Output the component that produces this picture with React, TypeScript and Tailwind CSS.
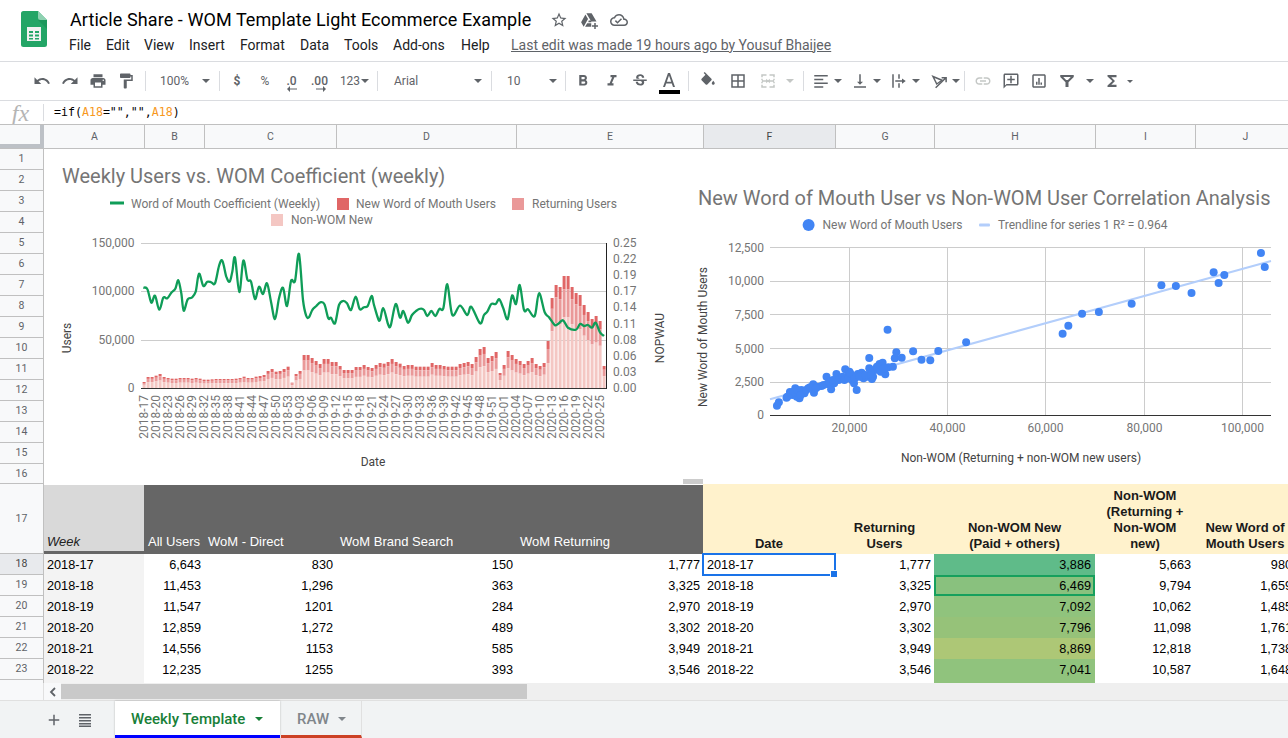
import React from "react";

const ICON = "#5f6368";
type P = [number, number];

function Ic({ d, size = 18, color = ICON }: { d: string; size?: number; color?: string }) {
  return (
    <svg width={size} height={size} viewBox="0 0 24 24" fill={color}>
      <path d={d} />
    </svg>
  );
}

function Caret({ color = ICON, small }: { color?: string; small?: boolean }) {
  return (
    <svg width={small ? 6 : 8} height={small ? 3 : 4} viewBox="0 0 8 4" fill={color} className="shrink-0">
      <path d="M0 0h8L4 4z" />
    </svg>
  );
}

function Sep() {
  return <div className="w-px h-[20px] bg-[#dadce0] shrink-0" />;
}

function smooth(pts: P[]) {
  let d = `M${pts[0][0].toFixed(1)} ${pts[0][1].toFixed(1)}`;
  for (let i = 0; i < pts.length - 1; i++) {
    const p0 = pts[Math.max(0, i - 1)];
    const p1 = pts[i];
    const p2 = pts[i + 1];
    const p3 = pts[Math.min(pts.length - 1, i + 2)];
    const c1x = p1[0] + (p2[0] - p0[0]) / 6;
    const c1y = p1[1] + (p2[1] - p0[1]) / 6;
    const c2x = p2[0] - (p3[0] - p1[0]) / 6;
    const c2y = p2[1] - (p3[1] - p1[1]) / 6;
    d += `C${c1x.toFixed(1)} ${c1y.toFixed(1)} ${c2x.toFixed(1)} ${c2y.toFixed(1)} ${p2[0].toFixed(1)} ${p2[1].toFixed(1)}`;
  }
  return d;
}

const tops = [
  457, 442, 442, 438, 433, 442, 445, 447, 447, 445, 445, 445, 447, 445, 447, 450, 450, 449, 448, 448, 448, 448, 448, 447, 445, 441,
  445, 445, 441, 439, 436, 424, 418, 426, 424, 418, 411, 459, 433, 424, 376, 376, 385, 394, 403, 388, 388, 397, 397, 409, 421, 421,
  421, 412, 412, 406, 412, 415, 406, 400, 402, 397, 388, 397, 402, 409, 406, 406, 411, 411, 411, 411, 400, 406, 406, 409, 411, 411,
  411, 403, 400, 397, 403, 382, 358, 352, 385, 379, 367, 430, 406, 364, 376, 388, 394, 403, 394, 385, 403, 409, 400, 334, 205, 166,
  172, 139, 139, 172, 190, 196, 226, 247, 268, 259, 274, 409,
];

const lineA: P[] = [
  [298, 173], [310, 177], [322, 218], [333, 197], [346, 239], [358, 203], [370, 205], [382, 188], [394, 176], [403, 151], [412, 190],
  [419, 242], [431, 208], [443, 203], [455, 185], [465, 131], [478, 168], [490, 155], [502, 157], [513, 160], [525, 108], [535, 92],
  [547, 140], [557, 155], [565, 125], [573, 83], [586, 186], [598, 92], [610, 148], [621, 155], [633, 207], [645, 170], [657, 192],
  [669, 160], [681, 215], [693, 267], [705, 205], [717, 173], [729, 228], [741, 153], [753, 153], [765, 72], [777, 210], [787, 258],
  [795, 262], [805, 240], [817, 228], [829, 217], [841, 222], [853, 265], [861, 263], [873, 280], [885, 225], [897, 213], [909, 220],
  [921, 240], [935, 200], [947, 237], [959, 232], [971, 228], [983, 198],
];
const lineB: P[] = [
  [0, 225], [12, 265], [18, 270], [28, 235], [42, 282], [50, 287], [65, 222], [78, 263], [88, 243], [102, 278], [114, 255], [126, 243],
  [140, 236], [150, 240], [160, 258], [172, 243], [184, 258], [196, 237], [208, 235], [220, 163], [235, 255], [258, 227], [280, 255],
  [292, 230], [318, 280], [330, 255], [340, 245], [352, 222], [365, 222], [376, 208], [388, 235], [401, 267], [414, 197], [426, 222],
  [437, 165], [450, 240], [462, 238], [482, 258], [495, 190], [512, 247], [525, 262], [542, 285], [552, 282], [567, 271], [582, 293],
  [606, 299], [618, 282], [630, 288], [642, 285], [654, 293], [665, 278], [678, 307], [690, 318],
];
const greenLine: P[] = [
  ...lineA.map(([x, y]) => [44 + x / 3, 230 + y / 3] as P),
  ...lineB.map(([x, y]) => [374 + x / 3, 230 + y / 3] as P),
];

const xLabels = [
  "2018-17", "2018-20", "2018-23", "2018-26", "2018-29", "2018-32", "2018-35", "2018-38", "2018-41", "2018-44", "2018-47", "2018-50",
  "2018-53", "2019-03", "2019-06", "2019-09", "2019-12", "2019-15", "2019-18", "2019-21", "2019-24", "2019-27", "2019-30", "2019-33",
  "2019-36", "2019-39", "2019-42", "2019-45", "2019-48", "2019-51", "2020-01", "2020-04", "2020-07", "2020-10", "2020-13", "2020-16",
  "2020-19", "2020-22", "2020-25",
];

function LeftChart() {
  const grey = "#757575";
  return (
    <svg width="636" height="335" viewBox="44 149 636 335" className="shrink-0 font-['Roboto',sans-serif]">
      <text x="62" y="183" fontSize="20" fill={grey}>Weekly Users vs. WOM Coefficient (weekly)</text>
      <rect x="110" y="201.5" width="14" height="3" fill="#0f9d58" />
      <text x="131" y="208" fontSize="12" fill={grey}>Word of Mouth Coefficient (Weekly)</text>
      <rect x="337" y="198" width="12" height="12" fill="#e06666" />
      <text x="356" y="208" fontSize="12" fill={grey}>New Word of Mouth Users</text>
      <rect x="512" y="198" width="12" height="12" fill="#ea9999" />
      <text x="532" y="208" fontSize="12" fill={grey}>Returning Users</text>
      <rect x="271" y="214" width="12" height="12" fill="#f4c7c3" />
      <text x="291" y="224" fontSize="12" fill={grey}>Non-WOM New</text>
      {[243.5, 291.5, 340.5].map((y) => (
        <line key={y} x1="141" x2="606" y1={y} y2={y} stroke="#ccc" />
      ))}
      {[["150,000", 247], ["100,000", 295], ["50,000", 344], ["0", 392]].map(([t, y]) => (
        <text key={t} x="134.5" y={y} fontSize="12" textAnchor="end" fill={grey}>{t}</text>
      ))}
      {tops.map((yz, i) => {
        const total = (475 - yz) / 3;
        const late = i >= 102 && i < 115;
        const t = total * (late ? 0.12 : 0.17);
        const m = total * (late ? 0.25 : 0.3);
        const x = 142.6 + i * 4;
        return (
          <g key={i}>
            <rect x={x} y={388 - total} width="3" height={t} fill="#e06666" />
            <rect x={x} y={388 - total + t} width="3" height={m} fill="#ea9999" />
            <rect x={x} y={388 - total + t + m} width="3" height={total - t - m} fill="#f4c7c3" />
          </g>
        );
      })}
      <line x1="141" x2="606" y1="388.5" y2="388.5" stroke="#333" />
      <line x1="606.5" x2="606.5" y1="243" y2="389" stroke="#222" />
      <path d={smooth(greenLine)} fill="none" stroke="#0f9d58" strokeWidth="2.3" strokeLinejoin="round" />
      {["0.25", "0.22", "0.19", "0.17", "0.14", "0.11", "0.08", "0.06", "0.03", "0.00"].map((t, i) => (
        <text key={t} x="613" y={247 + i * 16.11} fontSize="12" fill={grey}>{t}</text>
      ))}
      {xLabels.map((t, i) => {
        const x = 148.4 + i * 12;
        return (
          <text key={t} x={x} y="395" fontSize="12" textAnchor="end" fill={grey} transform={`rotate(-90 ${x} 395)`}>{t}</text>
        );
      })}
      <text x="71" y="338" fontSize="12" textAnchor="middle" fill="#444" transform="rotate(-90 71 338)">Users</text>
      <text x="664" y="338" fontSize="12" textAnchor="middle" fill="#444" transform="rotate(-90 664 338)">NOPWAU</text>
      <text x="373" y="466" fontSize="12" textAnchor="middle" fill="#444">Date</text>
    </svg>
  );
}

const dots: P[] = [
  [228, 677], [233, 667], [253, 653], [262, 636], [268, 645], [276, 625], [280, 650], [287, 655], [292, 630], [300, 640], [310, 625],
  [323, 613], [325, 638], [335, 620], [345, 618], [358, 590], [360, 612], [370, 628], [378, 610], [384, 582], [395, 595], [407, 568],
  [412, 590], [418, 575], [425, 600], [430, 610], [437, 630], [440, 582], [450, 578], [455, 595], [465, 590], [470, 565], [477, 597],
  [485, 570], [497, 552], [505, 548], [512, 583], [520, 562], [532, 560], [537, 535], [541, 517], [555, 533], [470, 534], [518, 449],
  [585, 514], [607, 539], [630, 541], [651, 513], [724, 487], [977, 461], [992, 437], [1028, 401], [1072, 396], [1158, 371], [1236, 316],
  [1274, 318], [1315, 339], [1373, 277], [1386, 309], [1401, 285], [1497, 219], [1507, 261], [255, 650], [265, 640], [272, 635],
  [282, 630], [290, 645], [305, 630], [315, 622], [330, 625], [350, 615], [365, 605], [375, 600], [390, 600], [400, 590], [405, 600],
  [415, 595], [420, 580], [432, 595], [445, 590], [460, 585], [475, 585], [480, 590], [490, 560], [500, 575], [508, 565],
];

function RightChart() {
  const grey = "#757575";
  const zx = (x: number) => 690 + x / 2.622;
  const zy = (y: number) => 180 + y / 3;
  return (
    <svg width="608" height="335" viewBox="680 149 608 335" className="shrink-0 font-['Roboto',sans-serif]">
      <text x="698" y="205" fontSize="20" fill={grey}>New Word of Mouth User vs Non-WOM User Correlation Analysis</text>
      <circle cx="808.6" cy="225" r="6" fill="#4285f4" />
      <text x="822.5" y="229" fontSize="12" fill={grey}>New Word of Mouth Users</text>
      <rect x="979" y="223.5" width="11" height="3" rx="1" fill="#b3cefb" />
      <text x="998" y="229" fontSize="12" fill={grey}>Trendline for series 1 R² = 0.964</text>
      {[849.5, 947.5, 1045.5, 1144.5, 1242.5].map((x) => (
        <line key={x} x1={x} x2={x} y1="247" y2="415" stroke="#ccc" />
      ))}
      {[247.5, 281.5, 314.5, 348.5, 382.5].map((y) => (
        <line key={y} x1="770" x2="1271" y1={y} y2={y} stroke="#ccc" />
      ))}
      <line x1="770" x2="1271" y1="415.5" y2="415.5" stroke="#333" />
      {[["12,500", 251.5], ["10,000", 285], ["7,500", 318.5], ["5,000", 352.5], ["2,500", 386], ["0", 419]].map(([t, y]) => (
        <text key={t} x="764" y={y} fontSize="12" textAnchor="end" fill={grey}>{t}</text>
      ))}
      {[["20,000", 849.5], ["40,000", 947.5], ["60,000", 1045.5], ["80,000", 1144.5], ["100,000", 1242.5]].map(([t, x]) => (
        <text key={t} x={x} y="432" fontSize="12" textAnchor="middle" fill={grey}>{t}</text>
      ))}
      <line x1="770" y1={zy(658)} x2="1271" y2={zy(243)} stroke="#b3cefb" strokeWidth="2" />
      {dots.map(([x, y], i) => (
        <circle key={i} cx={zx(x)} cy={zy(y)} r="4" fill="#4285f4" />
      ))}
      <text x="707" y="337" fontSize="12" textAnchor="middle" fill="#444" transform="rotate(-90 707 337)">New Word of Mouth Users</text>
      <text x="1021" y="462" fontSize="12" textAnchor="middle" fill="#444">Non-WOM (Returning + non-WOM new users)</text>
    </svg>
  );
}

const rows = [
  { n: 18, week: "2018-17", all: "6,643", dir: "830", brand: "150", ret: "1,777", date: "2018-17", nw: "3,886", nwBg: "bg-[#5fbb89]", non: "5,663", wom: "980" },
  { n: 19, week: "2018-18", all: "11,453", dir: "1,296", brand: "363", ret: "3,325", date: "2018-18", nw: "6,469", nwBg: "bg-[#89c17e]", non: "9,794", wom: "1,659" },
  { n: 20, week: "2018-19", all: "11,547", dir: "1201", brand: "284", ret: "2,970", date: "2018-19", nw: "7,092", nwBg: "bg-[#90c37d]", non: "10,062", wom: "1,485" },
  { n: 21, week: "2018-20", all: "12,859", dir: "1,272", brand: "489", ret: "3,302", date: "2018-20", nw: "7,796", nwBg: "bg-[#96c279]", non: "11,098", wom: "1,761" },
  { n: 22, week: "2018-21", all: "14,556", dir: "1153", brand: "585", ret: "3,949", date: "2018-21", nw: "8,869", nwBg: "bg-[#adc776]", non: "12,818", wom: "1,738" },
  { n: 23, week: "2018-22", all: "12,235", dir: "1255", brand: "393", ret: "3,546", date: "2018-22", nw: "7,041", nwBg: "bg-[#90c37d]", non: "10,587", wom: "1,648" },
];

const colTemplate = "grid grid-cols-[100px_60px_132px_180px_187px_132px_99px_161px_100px_100px]";
const cell = "px-[3px] text-[12.7px] leading-[23px] h-[21px] whitespace-nowrap overflow-hidden text-black";
const rightCell = cell + " text-right";

function RowNum({ n, cls, active }: { n: number | string; cls: string; active?: boolean }) {
  return (
    <div
      className={`${cls} flex items-center justify-center border-b border-[#c0c0c0] text-[10.5px] ${
        active ? "bg-[#e8eaed] text-[#444]" : "text-[#5f6368]"
      }`}
    >
      {n}
    </div>
  );
}

function TitleBar() {
  return (
    <div className="h-[62px] shrink-0 flex border-b border-[#dadce0]">
      <div className="w-[69px] shrink-0 pl-[21px] pt-[11px]">
        <svg width="26" height="36" viewBox="0 0 26 36">
          <path d="M2.5 0H17l9 9v24.5a2.5 2.5 0 0 1-2.5 2.5h-21A2.5 2.5 0 0 1 0 33.5v-31A2.5 2.5 0 0 1 2.5 0z" fill="#23a566" />
          <path d="M17 9l9 9V9z" fill="#188a52" opacity="0.5" />
          <path d="M17 0l9 9h-6.500A2.500 2.500 0 0 1 17 6.500z" fill="#8ed1b1" />
          <path d="M6 16h14v14H6zm2 4v2h4v-2zm6 0v2h4v-2zm-6 3.500v2h4v-2zm6 0v2h4v-2zm-6 3.500v1.500h4V27zm6 0v1.500h4V27z" fill="#f1f1f1" fillRule="evenodd" />
        </svg>
      </div>
      <div className="flex-1 flex flex-col">
        <div className="h-[25px] mt-[7px] flex items-center">
          <span className="w-[481px] pl-px shrink-0 text-[18px] leading-[25px] tracking-[0.08px] text-black font-['Roboto',sans-serif] whitespace-nowrap">
            Article Share - WOM Template Light Ecommerce Example
          </span>
          <div className="flex items-center gap-[12px]">
            <Ic size={18} d="M22 9.24l-7.19-.62L12 2 9.19 8.63 2 9.24l5.46 4.73L5.82 21 12 17.27 18.18 21l-1.63-7.03L22 9.24zM12 15.4l-3.76 2.27 1-4.28-3.32-2.88 4.38-.38L12 6.1l1.71 4.04 4.38.38-3.32 2.88 1 4.28L12 15.4z" />
            <Ic size={18} d="M8.5 3h7l6.5 11h-7zM7.2 4.6l3.5 6L4.9 21 1.5 15zM11.6 12.5h3.4v2.5H11zM6.8 21l2.8-4.8H15V21zM19 16h2v3h3v2h-3v3h-2v-3h-3v-2h3z" />
            <Ic size={18} d="M19.35 10.04C18.67 6.59 15.64 4 12 4 9.11 4 6.6 5.64 5.35 8.04 2.34 8.36 0 10.91 0 14c0 3.31 2.69 6 6 6h13c2.76 0 5-2.24 5-5 0-2.64-2.05-4.78-4.65-4.96zM19 18H6c-2.21 0-4-1.79-4-4 0-2.05 1.53-3.76 3.56-3.97l1.07-.11.5-.95C8.08 7.14 9.94 6 12 6c2.62 0 4.88 1.86 5.39 4.43l.3 1.5 1.53.11c1.56.1 2.78 1.41 2.78 2.96 0 1.65-1.35 3-3 3zm-9-3.82l-2.09-2.09L6.5 13.5 10 17l6.01-6.01-1.41-1.41z" />
          </div>
        </div>
        <div className="flex items-center h-[22px] mt-[2px] text-[14px] text-[#202124] font-['Roboto',sans-serif] whitespace-nowrap">
          <span className="w-[37px]">File</span>
          <span className="w-[38px]">Edit</span>
          <span className="w-[45px]">View</span>
          <span className="w-[51px]">Insert</span>
          <span className="w-[60px]">Format</span>
          <span className="w-[44px]">Data</span>
          <span className="w-[49px]">Tools</span>
          <span className="w-[68px]">Add-ons</span>
          <span className="w-[50px]">Help</span>
          <span className="underline text-[#5f6368] text-[14px]">Last edit was made 19 hours ago by Yousuf Bhaijee</span>
        </div>
      </div>
    </div>
  );
}

function Toolbar() {
  const btn = "h-[28px] flex items-center justify-center shrink-0";
  const left = "h-[28px] flex items-center justify-start shrink-0";
  const txt = "text-[12px] text-[#5f6368] font-['Roboto',sans-serif] whitespace-nowrap";
  return (
    <div className="h-[39px] shrink-0 flex items-center pl-[28px] border-b border-[#dadce0]">
      <div className={`${btn} w-[28px]`}><Ic d="M12.5 8c-2.65 0-5.05.99-6.9 2.6L2 7v9h9l-3.62-3.62c1.39-1.16 3.16-1.88 5.12-1.88 3.54 0 6.55 2.31 7.6 5.5l2.37-.78C21.08 11.03 17.15 8 12.5 8z" /></div>
      <div className={`${btn} w-[28px]`}><Ic d="M18.4 10.6C16.55 8.99 14.15 8 11.5 8c-4.65 0-8.58 3.03-9.96 7.22L3.9 16c1.05-3.19 4.05-5.5 7.6-5.5 1.95 0 3.73.72 5.12 1.88L13 16h9V7l-3.6 3.6z" /></div>
      <div className={`${btn} w-[28px]`}><Ic d="M19 8H5c-1.66 0-3 1.34-3 3v6h4v4h12v-4h4v-6c0-1.66-1.34-3-3-3zm-3 11H8v-5h8v5zm3-7c-.55 0-1-.45-1-1s.45-1 1-1 1 .45 1 1-.45 1-1 1zm-1-9H6v4h12V3z" /></div>
      <div className={`${btn} w-[28px]`}><Ic d="M18 4V3c0-.55-.45-1-1-1H5c-.55 0-1 .45-1 1v4c0 .55.45 1 1 1h12c.55 0 1-.45 1-1V6h1v4H9v11c0 .55.45 1 1 1h2c.55 0 1-.45 1-1v-9h8V4h-3z" /></div>
      <div className="w-[5px] shrink-0" />
      <Sep />
      <div className={`${btn} w-[73px] pl-[14px] pr-[9px] justify-between! ${txt}`}><span>100%</span><Caret /></div>
      <Sep />
      <div className="w-[3px] shrink-0" />
      <div className={`${btn} w-[28px] ${txt} font-bold`}>$</div>
      <div className={`${btn} w-[28px] ${txt}`}>%</div>
      <div className={`${btn} w-[25px] relative`}>
        <span className={`${txt} font-medium`}>.0</span>
        <svg className="absolute left-[8px] top-[19px]" width="10" height="6" viewBox="0 0 10 6" fill={ICON}><path d="M10 2.4H3V0L0 3l3 3V3.6h7z" /></svg>
      </div>
      <div className={`${btn} w-[31px] relative`}>
        <span className={`${txt} font-medium`}>.00</span>
        <svg className="absolute left-[12px] top-[19px]" width="10" height="6" viewBox="0 0 10 6" fill={ICON}><path d="M0 2.4h7V0l3 3-3 3V3.6H0z" /></svg>
      </div>
      <div className={`${btn} w-[39px] ${txt} gap-[1px]`}><span>123</span><Caret /></div>
      <div className="w-[3px] shrink-0" />
      <Sep />
      <div className={`${btn} w-[113px] pl-[16px] pr-[9px] justify-between! ${txt}`}><span>Arial</span><Caret /></div>
      <Sep />
      <div className={`${btn} w-[73px] pl-[15px] pr-[8px] justify-between! ${txt}`}><span>10</span><Caret /></div>
      <Sep />
      <div className="w-[3px] shrink-0" />
      <div className={`${btn} w-[28px]`}><Ic d="M15.6 10.79c.97-.67 1.65-1.77 1.65-2.79 0-2.26-1.75-4-4-4H7v14h7.04c2.09 0 3.71-1.7 3.71-3.79 0-1.52-.86-2.82-2.15-3.42zM10 6.5h3c.83 0 1.5.67 1.5 1.5s-.67 1.5-1.5 1.5h-3v-3zm3.5 9H10v-3h3.5c.83 0 1.5.67 1.5 1.5s-.67 1.5-1.5 1.5z" /></div>
      <div className={`${btn} w-[29px]`}><Ic d="M10 4v3h2.21l-3.42 8H6v3h8v-3h-2.21l3.42-8H18V4z" /></div>
      <div className={`${btn} w-[28px]`}><Ic d="M6.85 7.08C6.85 4.37 9.45 3 12.24 3c1.64 0 3 .49 3.9 1.28.77.65 1.46 1.73 1.46 3.24h-3.01c0-.31-.05-.59-.15-.85-.29-.86-1.2-1.28-2.25-1.28-1.86 0-2.34 1.02-2.34 1.7 0 .48.25.88.74 1.21.38.25.77.48 1.41.7H7.39c-.21-.34-.54-.89-.54-1.92zM21 12v-2H3v2h9.62c1.15.45 1.96.75 1.96 1.97 0 1-.81 1.67-2.28 1.67-1.54 0-2.93-.54-2.93-2.51H6.4c0 .55.08 1.13.24 1.58.81 2.29 3.29 3.3 5.67 3.3 2.27 0 5.3-.89 5.3-4.05 0-.3-.01-1.16-.48-1.94H21V12z" /></div>
      <div className={`${btn} w-[29px] relative`}>
        <svg width="12" height="14" viewBox="0 0 12 14" fill={ICON} className="mb-[2px]"><path d="M5 0h2l5 14h-2l-1.200-3.500H3.200L2 14H0zM3.800 8.800h4.400L6 2.400z" /></svg>
        <div className="absolute left-[5px] w-[21px] bottom-[1px] h-[4px] bg-black" />
      </div>
      <div className="w-[5px] shrink-0" />
      <Sep />
      <div className="w-[5px] shrink-0" />
      <div className={`${btn} w-[28px]`}><Ic d="M16.56 8.94L7.62 0 6.21 1.41l2.38 2.38-5.15 5.15c-.59.59-.59 1.54 0 2.12l5.5 5.5c.29.29.68.44 1.06.44s.77-.15 1.06-.44l5.5-5.5c.59-.58.59-1.53 0-2.12zM19 11.5s-2 2.17-2 3.5c0 1.1.9 2 2 2s2-.9 2-2c0-1.33-2-3.5-2-3.5z" /></div>
      <div className="w-[2px] shrink-0" />
      <div className={`${btn} w-[28px]`}><Ic d="M3 3v18h18V3H3zm8 16H5v-6h6v6zm0-8H5V5h6v6zm8 8h-6v-6h6v6zm0-8h-6V5h6v6z" /></div>
      <div className="w-[2px] shrink-0" />
      <div className={`${btn} w-[28px]`}><Ic color="#c4c7c5" d="M3 3h7v2H5v2H3zM14 3h7v4h-2V5h-5zM3 9h2v2H3zM19 9h2v2h-2zM4 11h5.500V9L13 12l-3.500 3v-2H4zM20 13h-5.500v2L11 12l3.500-3v2H20zM3 13h2v2H3zM19 13h2v2h-2zM3 17h2v2h5v2H3zM19 17h2v4h-7v-2h5z" /></div>
      <div className={`${btn} w-[16px]`}><Caret color="#c4c7c5" /></div>
      <div className="w-[5px] shrink-0" />
      <Sep />
      <div className={`${left} w-[46px] pl-[8px] gap-[4px]`}><Ic d="M3 4h18v2H3zM3 9h12v2H3zM3 14h18v2H3zM3 19h12v2H3z" /><Caret /></div>
      <div className={`${left} w-[36px] pl-[1px] gap-[4px]`}><Ic d="M16 13h-3V3h-2v10H8l4 4 4-4zM4 19v2h16v-2H4z" /><Caret /></div>
      <div className={`${left} w-[39px] pl-[4px] gap-[4px]`}><Ic d="M3 3h2v18H3zM11 3h2v6h-2zM11 15h2v6h-2zM7 11h9V8.500L21 12l-5 3.500V13H7z" /><Caret /></div>
      <div className={`${left} w-[39px] pl-[5px] gap-[4px]`}>
        <svg width="18" height="18" viewBox="0 0 24 24" fill="none" stroke={ICON} strokeWidth="2">
          <path d="M4 6l12 5-7 5z" />
          <path d="M7.500 21L21 8M15.500 7.500H21.500V13.500" />
        </svg>
        <Caret />
      </div>
      <Sep />
      <div className="w-[4px] shrink-0" />
      <div className={`${btn} w-[28px]`}><Ic color="#c4c7c5" d="M3.900 12c0-1.710 1.390-3.100 3.100-3.100h4V7H7c-2.760 0-5 2.240-5 5s2.240 5 5 5h4v-1.900H7c-1.710 0-3.100-1.390-3.100-3.100zM8 13h8v-2H8v2zm9-6h-4v1.900h4c1.710 0 3.100 1.390 3.100 3.100s-1.390 3.100-3.100 3.100h-4V17h4c2.760 0 5-2.240 5-5s-2.240-5-5-5z" /></div>
      <div className={`${btn} w-[28px]`}><Ic d="M20 2H4c-1.100 0-2 .900-2 2v18l4-4h14c1.100 0 2-.900 2-2V4c0-1.100-.900-2-2-2zm0 14H6l-2 2V4h16v12zM13 5h-2v4H7v2h4v4h2v-4h4V9h-4z" /></div>
      <div className={`${btn} w-[28px]`}><Ic d="M19 3H5c-1.100 0-2 .900-2 2v14c0 1.100.900 2 2 2h14c1.100 0 2-.900 2-2V5c0-1.100-.900-2-2-2zm0 16H5V5h14v14zM8 13h2v4H8zm3-5h2v9h-2zm3 6h2v3h-2z" /></div>
      <div className={`${btn} w-[28px]`}><Ic d="M3 4h18v2.500l-7 7V20h-4v-6.500l-7-7zM7 6.500l3.800 4h2.400L17 6.500z" /></div>
      <div className={`${btn} w-[17px]`}><Caret /></div>
      <div className={`${btn} w-[28px]`}><Ic d="M18 4H6v2l6.500 6L6 18v2h12v-3h-7l5-5-5-5h7z" /></div>
      <div className={`${btn} w-[8px]`}><Caret small /></div>
    </div>
  );
}

function FormulaBar() {
  return (
    <div className="h-[23px] shrink-0 flex items-center">
      <div className="w-[44px] shrink-0 h-[17px] border-r border-[#dadce0] flex items-center justify-center pr-[2px] font-['Liberation_Serif',serif] italic text-[24px] text-[#b5b5b5]">
        fx
      </div>
      <div className="pl-[10px] font-['DejaVu_Sans_Mono',monospace] text-[11.6px] text-black whitespace-nowrap">
        =if(<span className="text-[#f7981d]">A18</span>=<span>""</span>,<span>""</span>,<span className="text-[#f7981d]">A18</span>)
      </div>
    </div>
  );
}

function ColumnHeaders() {
  const cols: [string, string][] = [
    ["A", "w-[100px]"], ["B", "w-[60px]"], ["C", "w-[132px]"], ["D", "w-[180px]"], ["E", "w-[187px]"],
    ["F", "w-[132px]"], ["G", "w-[99px]"], ["H", "w-[161px]"], ["I", "w-[100px]"], ["J", "w-[100px]"],
  ];
  return (
    <div className="h-[25px] shrink-0 flex bg-[#f8f9fa] border-y border-[#c0c0c0] overflow-hidden font-['Roboto',sans-serif]">
      <div className="w-[44px] shrink-0 border-r-[4px] border-b-[4px] border-[#bdc1c6] box-border" />
      <div className="w-px shrink-0" />
      {cols.map(([c, w]) => (
        <div
          key={c}
          className={`${w} shrink-0 border-r border-[#c0c0c0] flex items-center justify-center text-[10.5px] ${
            c === "F" ? "bg-[#e8eaed] text-[#444]" : "text-[#5f6368]"
          }`}
        >
          {c}
        </div>
      ))}
    </div>
  );
}

function Sheet() {
  const dark = "h-[70px] flex items-end bg-[#666666] border-t border-white text-white text-[13px] leading-[16px] pb-[4px] whitespace-nowrap";
  const yellow = "h-[70px] flex items-end justify-center text-center bg-[#fff2cc] text-[13px] leading-[16px] font-bold text-[#1a1a1a] pb-[2px]";
  return (
    <div className="h-[534px] shrink-0 flex overflow-hidden font-['Liberation_Sans',Arial,sans-serif]">
      <div className="w-[44px] shrink-0 flex flex-col bg-[#f8f9fa] border-r border-[#c0c0c0] font-['Roboto',sans-serif]">
        {[1, 2, 3, 4, 5, 6, 7, 8, 9, 10, 11, 12, 13, 14, 15].map((n) => (
          <RowNum key={n} n={n} cls="h-[21px] shrink-0" />
        ))}
        <RowNum n={16} cls="h-[20px] shrink-0" />
        <RowNum n={17} cls="h-[70px] shrink-0" />
        {rows.map((r) => (
          <RowNum key={r.n} n={r.n} cls="h-[21px] shrink-0" active={r.n === 18} />
        ))}
      </div>
      <div className="flex-1 min-w-0 flex flex-col overflow-hidden">
        <div className="h-[335px] shrink-0 flex bg-white relative">
          <LeftChart />
          <RightChart />
          <div className="absolute left-[639px] bottom-0 w-[20px] h-[5px] bg-[#cccccc]" />
        </div>
        <div className={`${colTemplate} w-[1251px] shrink-0`}>
          <div className="h-[70px] flex items-end bg-[#d9d9d9] border-t border-white border-b-[3px] border-b-[#666666] px-[3px] pb-[1px] text-[13px] leading-[16px] italic text-[#222]">Week</div>
          <div className={`${dark} pl-[4px]`}>All Users</div>
          <div className={`${dark} pl-[4px]`}>WoM - Direct</div>
          <div className={`${dark} pl-[4px]`}>WoM Brand Search</div>
          <div className={`${dark} pl-[4px]`}>WoM Returning</div>
          <div className={yellow}>Date</div>
          <div className={yellow}>Returning<br />Users</div>
          <div className={yellow}>Non-WOM New<br />(Paid + others)</div>
          <div className={yellow}>Non-WOM<br />(Returning +<br />Non-WOM<br />new)</div>
          <div className={yellow}>New Word of<br />Mouth Users</div>
        </div>
        {rows.map((r) => (
          <div key={r.n} className={`${colTemplate} w-[1251px] shrink-0`}>
            <div className={`${cell} bg-[#f3f3f3]`}>{r.week}</div>
            <div className={rightCell}>{r.all}</div>
            <div className={rightCell}>{r.dir}</div>
            <div className={rightCell}>{r.brand}</div>
            <div className={rightCell}>{r.ret}</div>
            <div className="relative h-[21px]">
              <div className={`${cell} pl-[4px]`}>{r.date}</div>
              {r.n === 18 && (
                <>
                  <div className="absolute left-[-1px] right-[-1px] top-[-1px] bottom-[-1px] border-2 border-[#1a73e8]" />
                  <div className="absolute right-[-3px] bottom-[-3px] w-[6px] h-[6px] bg-[#1a73e8] border border-white box-content" />
                </>
              )}
            </div>
            <div className={rightCell}>{r.ret}</div>
            <div className={`relative ${r.nwBg} h-[21px]`}>
              <div className={`${rightCell} pr-[4px]`}>{r.nw}</div>
              {r.n === 19 && <div className="absolute left-0 right-0 top-0 bottom-0 border-2 border-[#16a05d]" />}
            </div>
            <div className={`${rightCell} pr-[4px]`}>{r.non}</div>
            <div className={rightCell}>{r.wom}</div>
          </div>
        ))}
        <div className={`${colTemplate} w-[1251px] h-[3px] shrink-0`}>
          <div className="bg-[#f3f3f3]" />
          <div className="col-span-6" />
          <div className="bg-[#90c37d]" />
        </div>
      </div>
    </div>
  );
}

function Scrollbar() {
  return (
    <div className="h-[17px] shrink-0 flex bg-[#efefef]">
      <div className="w-[44px] shrink-0 bg-[#f8f9fa] border-r border-[#e0e0e0]" />
      <div className="w-[17px] shrink-0 flex items-center justify-center bg-[#f8f9fa]">
        <svg width="8" height="10" viewBox="0 0 8 10" fill="none" stroke="#5f6368" strokeWidth="1.800"><path d="M6 1L2 5l4 4" /></svg>
      </div>
      <div className="w-[466px] h-[15px] mt-px shrink-0 bg-[#c9c9c9]" />
    </div>
  );
}

function Tabs() {
  return (
    <div className="flex-1 flex items-stretch bg-[#f1f3f4] border-t border-[#e0e0e0] font-['Roboto',sans-serif]">
      <div className="w-[115px] shrink-0 flex items-center pl-[45px] gap-[15px]">
        <Ic size={18} d="M19 13h-6v6h-2v-6H5v-2h6V5h2v6h6v2z" />
        <svg width="14" height="14" viewBox="0 0 14 14" fill={ICON}><path d="M1 1h12v1.500H1zM1 4h12v1.500H1zM1 7h12v1.500H1zM1 10h12v1.500H1zM1 12.500h12V14H1z" /></svg>
      </div>
      <div className="w-[165px] shrink-0 bg-white border-b-[3px] border-[#0000ff] shadow-[0_0_2px_rgba(0,0,0,0.25)] flex items-center pl-[16px] pt-[2px] gap-[10px]">
        <span className="text-[15px] font-medium text-[#188038] whitespace-nowrap">Weekly Template</span>
        <Caret color="#188038" />
      </div>
      <div className="w-px shrink-0" />
      <div className="w-[81px] shrink-0 border-b-[3px] border-[#cc4125] border-r border-r-[#e0e0e0] flex items-center pl-[16px] pt-[2px] gap-[9px]">
        <span className="text-[15px] font-medium text-[#80868b]">RAW</span>
        <Caret color="#80868b" />
      </div>
    </div>
  );
}

export default function App() {
  return (
    <div className="w-[1288px] h-[738px] overflow-hidden flex flex-col bg-white">
      <TitleBar />
      <Toolbar />
      <FormulaBar />
      <ColumnHeaders />
      <Sheet />
      <Scrollbar />
      <Tabs />
    </div>
  );
}
